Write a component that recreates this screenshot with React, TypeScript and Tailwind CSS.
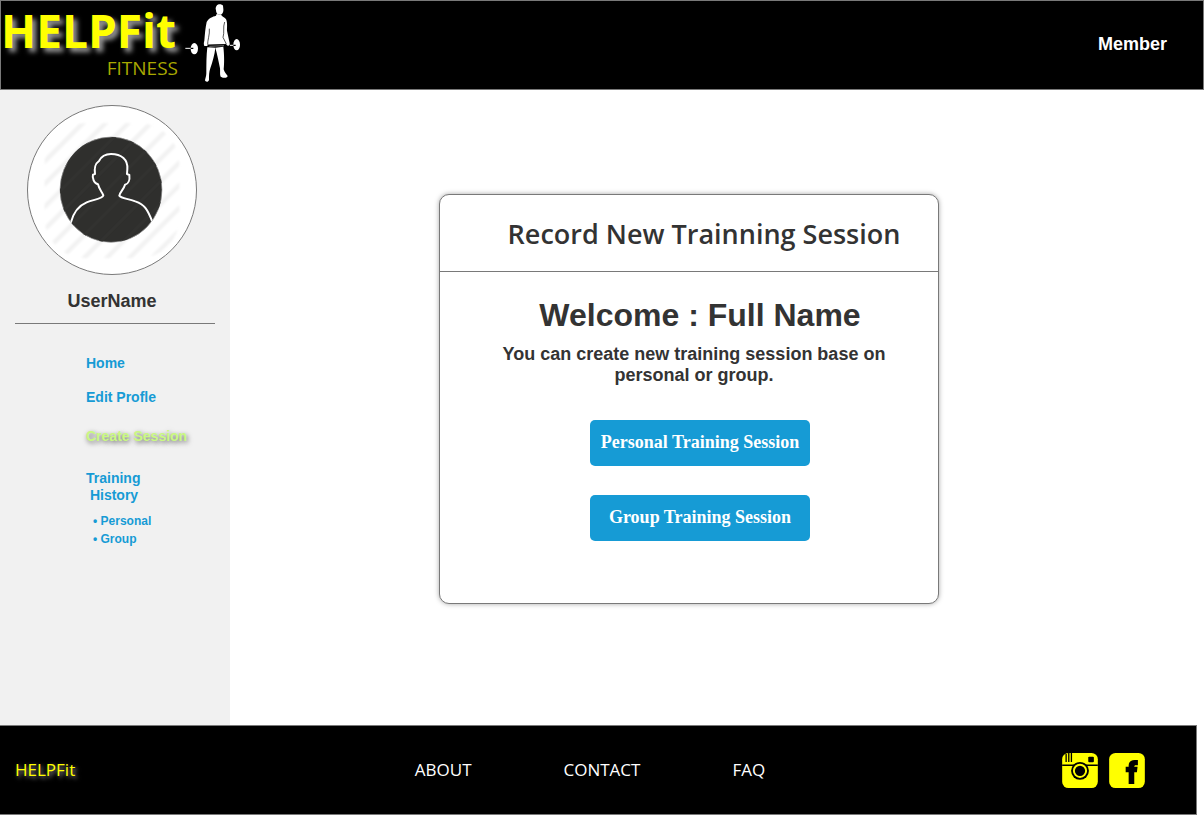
import React from 'react';

const humanist = "font-['Open_Sans',sans-serif]";

function Weightlifter() {
  return (
    <svg viewBox="0 3 198 264" className="h-[88px] w-[66px]" aria-hidden="true">
      <g fill="#fff">
        <path d="M110 17 C112 11 126 11 129 17 L130 27 C131 35 127 43 122 44 L112 42 C109 38 108 34 108 30 C106 26 107 21 110 17 Z" />
        <path d="M110 42 L123 44 C126 49 131 50 137 56 C143 63 141 82 141 92 L149 130 C150 137 146 138 143 137 L137 131 L135 133 L83 134 L82 138 L73 138 C71 133 71 128 73 122 C75 100 76 84 80 66 C86 54 98 50 108 47 Z" />
        <path d="M82 142 L106 143 C104 164 98 184 91 205 C87 216 87 226 87 240 C85 247 77 247 75 241 C76 234 79 229 79 219 C79 193 79 166 82 142 Z" />
        <path d="M106 143 L130 140 C133 166 133 191 131 208 C133 217 139 222 143 228 C142 234 133 236 122 230 C119 225 121 216 120 205 C116 185 112 164 106 143 Z" />
        <ellipse cx="43" cy="146" rx="11" ry="17" />
        <ellipse cx="170" cy="134" rx="10" ry="17" />
      </g>
      <g fill="none" stroke="#000">
        <path d="M88 86 C90 103 82 122 83 134" strokeWidth="2" />
        <path d="M134 66 C128 82 134 98 129 112 L139 132" strokeWidth="2" />
        <path d="M84 137 L135 135" strokeWidth="5" />
      </g>
      <path d="M88 139 L132 137" stroke="#ddd" strokeWidth="1.5" />
      <path d="M16 145 H38 M150 136 H167" stroke="#fff" strokeWidth="3" />
      <path d="M32 145 H40 M160 136 H167" stroke="#000" strokeWidth="4" />
    </svg>
  );
}

const stripes = [235, 303, 371, 439, 507, 575, 643, 711, 779, 847, 915];

function Avatar() {
  return (
    <svg viewBox="51 30 510 510" className="size-[170px]" role="img" aria-label="User avatar">
      <defs>
        <clipPath id="stripe-area">
          <rect x="104" y="85" width="404" height="404" rx="120" />
        </clipPath>
        <clipPath id="portrait">
          <ellipse cx="303" cy="284" rx="153" ry="158" />
        </clipPath>
        <filter id="soften">
          <feGaussianBlur stdDeviation="3" />
        </filter>
      </defs>
      <circle cx="306" cy="285" r="253.5" fill="#fff" stroke="#797979" strokeWidth="3" />
      <g filter="url(#soften)">
        <g clipPath="url(#stripe-area)" stroke="#f2f2f2" strokeWidth="13">
          {stripes.map((s) => (
            <line key={s} x1={s - 540} y1="540" x2={s} y2="0" />
          ))}
        </g>
      </g>
      <ellipse cx="303" cy="284" rx="153" ry="158" fill="#2f2f2d" stroke="#999" strokeWidth="2" />
      <g clipPath="url(#portrait)">
        <g stroke="#323230" strokeWidth="10">
          {stripes.map((s) => (
            <line key={s} x1={s - 540} y1="540" x2={s} y2="0" />
          ))}
        </g>
        <path
          d="M182 384 C190 352 203 333 230 322 C253 313 278 311 280 301 C276 290 268 285 264 268 C252 266 246 248 249 239 L255 237 C252 215 256 206 267 198 C274 184 285 177 303 177 C335 177 354 194 352 222 L351 237 L358 240 C360 255 355 267 345 269 C341 284 330 290 328 302 C334 311 352 310 376 319 C405 329 413 345 427 380"
          fill="none"
          stroke="#fff"
          strokeWidth="6"
          strokeLinejoin="round"
        />
      </g>
    </svg>
  );
}

function InstagramLogo() {
  return (
    <svg viewBox="66 113 108 106" className="h-[35px] w-9" aria-hidden="true">
      <rect x="66" y="113" width="108" height="106" rx="19" fill="#ff0" />
      <path d="M78 116 V140 M86 113 V140 M94 113 V140" stroke="#000" strokeWidth="4" />
      <path d="M66 150 H174" stroke="#000" strokeWidth="4" />
      <rect x="145" y="124" width="17" height="17" rx="3" />
      <circle cx="120" cy="167" r="27" />
      <circle cx="120" cy="167" r="18.5" fill="none" stroke="#ff0" strokeWidth="6" />
    </svg>
  );
}

function FacebookLogo() {
  return (
    <svg viewBox="207 113 108 106" className="h-[35px] w-9" aria-hidden="true">
      <rect x="207" y="113" width="108" height="106" rx="19" fill="#ff0" />
      <path d="M266 207 V171 H257 V155 H266 V150 C266 139 275 134 284 134 H294 V150 H288 C284 150 283 152 283 155 H293 L291 171 H283 V207 Z" />
    </svg>
  );
}

export default function App() {
  return (
    <div className="flex min-h-screen flex-col bg-white font-['Liberation_Sans',Arial,sans-serif] text-[#333]">
      <header className="flex items-start justify-between border border-[#797979] bg-black">
        <div className="flex">
          <div className="flex w-[179px] flex-col pt-1 text-right">
            <span className={`${humanist} text-left text-[46px] leading-[50px] font-bold text-[#ff0] [text-shadow:4px_4px_5px_rgba(255,255,255,0.6)]`}>
              HELPFit
            </span>
            <span className={`${humanist} pr-0.5 text-[19px] leading-[26px] text-[#a8a800]`}>FITNESS</span>
          </div>
          <Weightlifter />
        </div>
        <span className="self-center pr-9 pb-0.5 text-lg leading-[21px] font-bold text-white">Member</span>
      </header>

      <div className="flex flex-1">
        <aside className="w-[230px] shrink-0 bg-[#f1f1f1] px-[15px] pt-[15px]">
          <div className="flex flex-col items-center border-b border-[#797979] pr-1.5 pb-[11px]">
            <Avatar />
            <p className="mt-4 text-lg leading-[21px] font-bold">UserName</p>
          </div>
          <nav className="flex flex-col items-start pt-[31px] pl-[71px] text-sm leading-[17px] font-bold text-[#169bd5]">
            <a href="#home">Home</a>
            <a href="#edit" className="mt-[17px]">Edit Profle</a>
            <a href="#create" className="mt-[22px] text-[#caf982] [text-shadow:1px_2px_5px_rgba(0,0,0,0.6)]">
              Create Session
            </a>
            <a href="#history" className="mt-[25px] whitespace-pre">{'Training\n History'}</a>
            <ul className="mt-2 pl-[7px] text-xs leading-[18px]">
              <li><a href="#personal">• Personal</a></li>
              <li><a href="#group">• Group</a></li>
            </ul>
          </nav>
        </aside>

        <main className="flex flex-1 items-start justify-center pt-[104px] pr-14">
          <section className="w-full max-w-[500px] rounded-[10px] border border-[#797979] bg-white pb-[62px] shadow-[0_0_5px_rgba(0,0,0,0.35)]">
            <h1 className={`${humanist} border-b border-[#797979] pt-[21px] pb-[19px] pl-[30px] text-center text-[27px] leading-9 font-semibold`}>
              Record New Trainning Session
            </h1>
            <div className="flex flex-col items-center pt-6 pl-[22px]">
              <h2 className="text-[32px] leading-[38px] font-bold">Welcome : Full Name</h2>
              <p className="mt-2.5 mr-3 w-[390px] text-center text-lg leading-[21px] font-bold">
                You can create new training session base on personal or group.
              </p>
              <div className="mt-[34px] flex flex-col gap-[29px] font-['Liberation_Serif',serif] text-lg font-bold text-white">
                <button type="button" className="h-[46px] w-[220px] rounded-[5px] bg-[#169bd5] pb-0.5">
                  Personal Training Session
                </button>
                <button type="button" className="h-[46px] w-[220px] rounded-[5px] bg-[#169bd5] pb-0.5">
                  Group Training Session
                </button>
              </div>
            </div>
          </section>
        </main>
      </div>

      <footer className={`${humanist} mr-[7px] grid h-[90px] grid-cols-[1fr_auto_1fr] items-center border border-l-0 border-[#797979] bg-black pr-4 text-[17px] text-white`}>
        <span className="pl-[15px] text-[#ff0] [text-shadow:2px_2px_4px_rgba(255,255,255,0.6)]">HELPFit</span>
        <nav className="flex gap-[92px]">
          <a href="#about">ABOUT</a>
          <a href="#contact">CONTACT</a>
          <a href="#faq">FAQ</a>
        </nav>
        <div className="flex justify-end gap-[11px] pr-[35px]">
          <a href="#instagram" aria-label="Instagram"><InstagramLogo /></a>
          <a href="#facebook" aria-label="Facebook"><FacebookLogo /></a>
        </div>
      </footer>
    </div>
  );
}
